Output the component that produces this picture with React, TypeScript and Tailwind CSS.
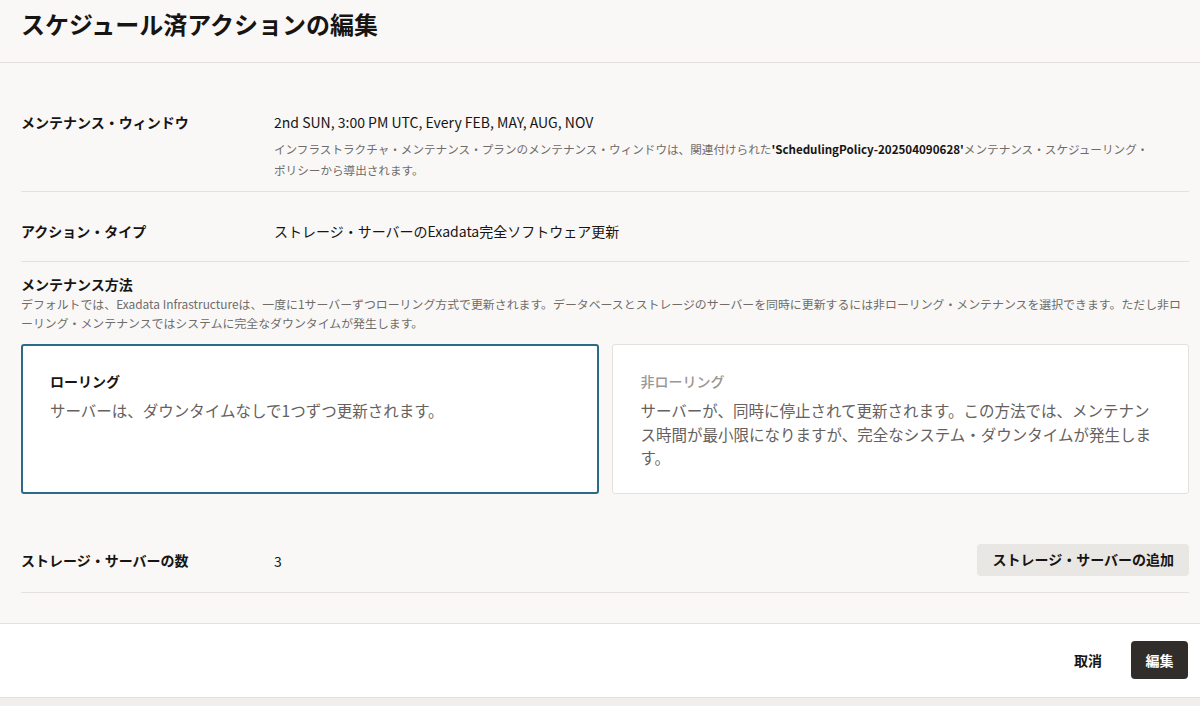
const font = { fontFamily: '"Noto Sans CJK JP", "Noto Sans", sans-serif' };

const Row = ({ label, children, className }: { label: string; children: React.ReactNode; className?: string }) => (
  <div className={`flex border-b border-[#e4e1dd] ${className ?? ""}`}>
    <div className="w-[253px] shrink-0 text-[14px] leading-[20px] font-bold text-[#161513]">{label}</div>
    <div className="flex-1 min-w-0">{children}</div>
  </div>
);

const App = () => {
  return (
    <div className="h-[706px] w-[1200px] overflow-hidden bg-[#f1efed] flex flex-col" style={font}>
      {/* Header */}
      <div className="h-[63px] shrink-0 border-b border-[#e4e1dd] bg-[#f9f8f7] px-[21px] pt-[8px]">
        <h1 className="text-[24px] leading-[32px] font-bold text-[#161513]">スケジュール済アクションの編集</h1>
      </div>

      {/* Body */}
      <div className="bg-[#f9f8f7] pl-[21px] pr-[11px] pt-[20px] pb-[30px] border-b border-[#e4e1dd]">
        <Row label="メンテナンス・ウィンドウ" className="pt-[29px] pb-[10px]">
          <div className="text-[14px] leading-[20px] text-[#161513]">2nd SUN, 3:00 PM UTC, Every FEB, MAY, AUG, NOV</div>
          <p className="mt-[7px] pr-[20px] text-[11.6px] leading-[21px] text-[#6f6c69]">
            インフラストラクチャ・メンテナンス・プランのメンテナンス・ウィンドウは、関連付けられた
            <span className="font-bold text-[#161513]">'SchedulingPolicy-202504090628'</span>
            メンテナンス・スケジューリング・<span className="whitespace-nowrap">ポリシー</span>から導出されます。
          </p>
        </Row>

        <Row label="アクション・タイプ" className="pt-[29px] pb-[20px]">
          <div className="text-[14px] leading-[20px] text-[#161513]">ストレージ・サーバーのExadata完全ソフトウェア更新</div>
        </Row>

        {/* Maintenance method */}
        <div className="pt-[12px]">
          <div className="text-[14px] leading-[20px] font-bold text-[#161513]">メンテナンス方法</div>
          <p className="text-[11.9px] leading-[19px] text-[#6f6c69]">
            デフォルトでは、Exadata Infrastructureは、一度に1サーバーずつローリング方式で更新されます。データベースとストレージのサーバーを同時に更新するには非ローリング・メンテナンスを選択できます。ただし非ローリング・メンテナンスではシステムに完全なダウンタイムが発生します。
          </p>

          <div className="mt-[12px] grid grid-cols-2 gap-[13px]">
            <div className="rounded-[3px] border-2 border-[#2b6a88] bg-white pl-[27px] pr-[27px] pt-[25px] pb-[22px]">
              <div className="text-[14px] leading-[20px] font-bold text-[#161513]">ローリング</div>
              <p className="mt-[8px] text-[15.5px] leading-[23.5px] text-[#65615e]">サーバーは、ダウンタイムなしで1つずつ更新されます。</p>
            </div>
            <div className="rounded-[3px] border border-[#e4e1dd] bg-white pl-[28px] pr-[28px] pt-[26px] pb-[23px]">
              <div className="text-[14px] leading-[20px] font-medium text-[#9a9693]">非ローリング</div>
              <p className="mt-[8px] text-[15.5px] leading-[23.5px] text-[#65615e]">
                サーバーが、同時に停止されて更新されます。この方法では、メンテナンス時間が最小限になりますが、完全なシステム・ダウンタイムが発生します。
              </p>
            </div>
          </div>
        </div>

        {/* Storage servers */}
        <div className="mt-[50px] flex items-center border-b border-[#e4e1dd] pb-[16px]">
          <div className="w-[253px] shrink-0 text-[14px] leading-[20px] font-bold text-[#161513]">ストレージ・サーバーの数</div>
          <div className="flex-1 text-[14px] leading-[20px] text-[#161513] pt-[2px]">3</div>
          <button className="h-[32px] rounded-[4px] bg-[#e9e7e4] px-[15px] text-[14px] font-bold text-[#161513]">
            ストレージ・サーバーの追加
          </button>
        </div>
      </div>

      {/* Footer */}
      <div className="h-[74px] shrink-0 bg-white border-b border-[#e4e1dd] flex items-center justify-end gap-[15px] px-[12px]">
        <button className="h-[38px] px-[14px] text-[14px] font-bold text-[#161513]">取消</button>
        <button className="h-[38px] w-[57px] rounded-[4px] bg-[#312d2a] text-[14px] font-bold text-white">編集</button>
      </div>
    </div>
  );
};

export default App;
